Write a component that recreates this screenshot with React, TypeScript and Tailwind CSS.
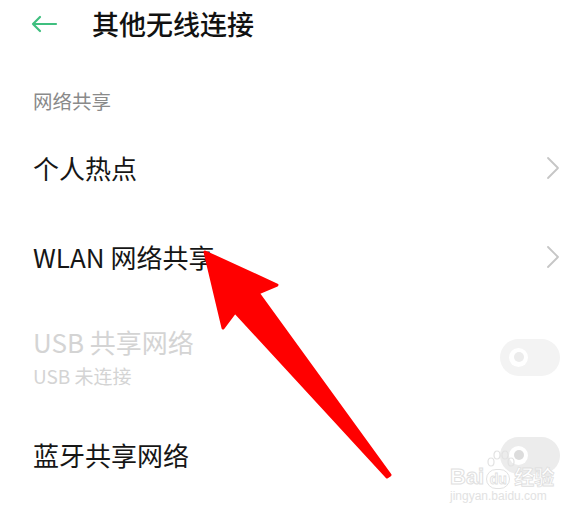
import React from "react";

const font = { fontFamily: '"Noto Sans CJK SC", "Noto Sans", sans-serif' };

function Chevron() {
  return (
    <svg width="14" height="24" viewBox="0 0 14 24" fill="none">
      <path d="M2 2 L12 12 L2 22" stroke="#c6c6c6" strokeWidth="1.8" strokeLinecap="round" strokeLinejoin="round" />
    </svg>
  );
}

function Toggle({ dim }: { dim?: boolean }) {
  return (
    <div className={`w-[60px] h-[37px] rounded-full flex items-center pl-[9px] ${dim ? "bg-[#f3f3f3]" : "bg-[#ececec]"}`}>
      <div className="w-[19px] h-[19px] rounded-full bg-white flex items-center justify-center">
        <div className={`w-[10px] h-[10px] rounded-full ${dim ? "bg-[#ececec]" : "bg-[#dcdcdc]"}`} />
      </div>
    </div>
  );
}

export default function App() {
  return (
    <div className="relative w-[588px] h-[516px] bg-white overflow-hidden" style={font}>
      {/* Header */}
      <div className="h-[48px] flex items-center pl-[30px]">
        <svg width="28" height="18" viewBox="0 0 28 18" fill="none">
          <path d="M26 9 H3 M10 2 L3 9 L10 16" stroke="#3fbf7f" strokeWidth="2.2" strokeLinecap="round" strokeLinejoin="round" />
        </svg>
        <div className="ml-[34px] text-[27px] leading-[30px] font-medium text-[#111]">其他无线连接</div>
      </div>

      {/* Section label */}
      <div className="mt-[41px] pl-[33px] text-[19.5px] leading-[24px] text-[#8a8a8a]">网络共享</div>

      {/* Rows */}
      <div className="mt-[11px] flex flex-col">
        <div className="h-[88px] flex items-center justify-between pl-[33px] pr-[28px]">
          <span className="text-[26px] leading-[30px] text-[#161616]">个人热点</span>
          <Chevron />
        </div>
        <div className="h-[90px] flex items-center justify-between pl-[33px] pr-[28px]">
          <span className="text-[26px] leading-[30px] text-[#161616]">WLAN 网络共享</span>
          <Chevron />
        </div>
        <div className="h-[110px] flex items-center justify-between pl-[33px] pr-[28px]">
          <div className="flex flex-col">
            <span className="text-[26px] leading-[30px] text-[#d4d4d4]">USB 共享网络</span>
            <span className="mt-[7px] text-[19px] leading-[24px] text-[#d4d4d4]">USB 未连接</span>
          </div>
          <Toggle dim />
        </div>
        <div className="h-[86px] flex items-center justify-between pl-[33px] pr-[28px]">
          <span className="text-[26px] leading-[30px] text-[#161616]">蓝牙共享网络</span>
          <Toggle />
        </div>
      </div>

      {/* Watermark */}
      <div className="absolute left-[450px] top-[450px] w-[110px] h-[55px] pointer-events-none">
        <svg className="absolute left-[34px] top-0" width="34" height="22" viewBox="0 0 34 22" fill="none" stroke="#e2e2e2" strokeWidth="1.2">
          <ellipse cx="7" cy="12" rx="3" ry="4" />
          <ellipse cx="13" cy="5" rx="3" ry="4" />
          <ellipse cx="21" cy="5" rx="3" ry="4" />
          <ellipse cx="27" cy="12" rx="3" ry="4" />
        </svg>
        <div className="absolute left-0 top-[15px] flex items-end" style={{ fontFamily: '"Liberation Sans", "Noto Sans CJK SC", sans-serif' }}>
          <span className="text-[22px] leading-[24px] font-bold text-white" style={{ WebkitTextStroke: "1px #e0e0e0" }}>Bai</span>
          <span className="ml-[2px] w-[24px] h-[20px] rounded-[10px] border border-[#e2e2e2] text-[14px] leading-[18px] text-center font-bold text-white" style={{ WebkitTextStroke: "0.8px #e0e0e0" }}>du</span>
          <span className="ml-[4px] text-[20px] leading-[24px] font-bold text-white" style={{ WebkitTextStroke: "0.8px #dedede", fontFamily: '"Noto Sans CJK SC", sans-serif' }}>经验</span>
        </div>
        <div className="absolute left-0 top-[39px] text-[12px] leading-[14px] text-[#e2e2e2]" style={{ fontFamily: '"Liberation Sans", sans-serif' }}>jingyan.baidu.com</div>
      </div>

      {/* Red arrow */}
      <svg className="absolute left-0 top-0 pointer-events-none" width="588" height="516" viewBox="0 0 588 516">
        <polygon
          points="205,252 277,285 258,293 390,475 387,477 235,312 223,328"
          fill="#ff0000"
          stroke="#ff0000"
          strokeWidth="3"
          strokeLinejoin="round"
        />
      </svg>
    </div>
  );
}
